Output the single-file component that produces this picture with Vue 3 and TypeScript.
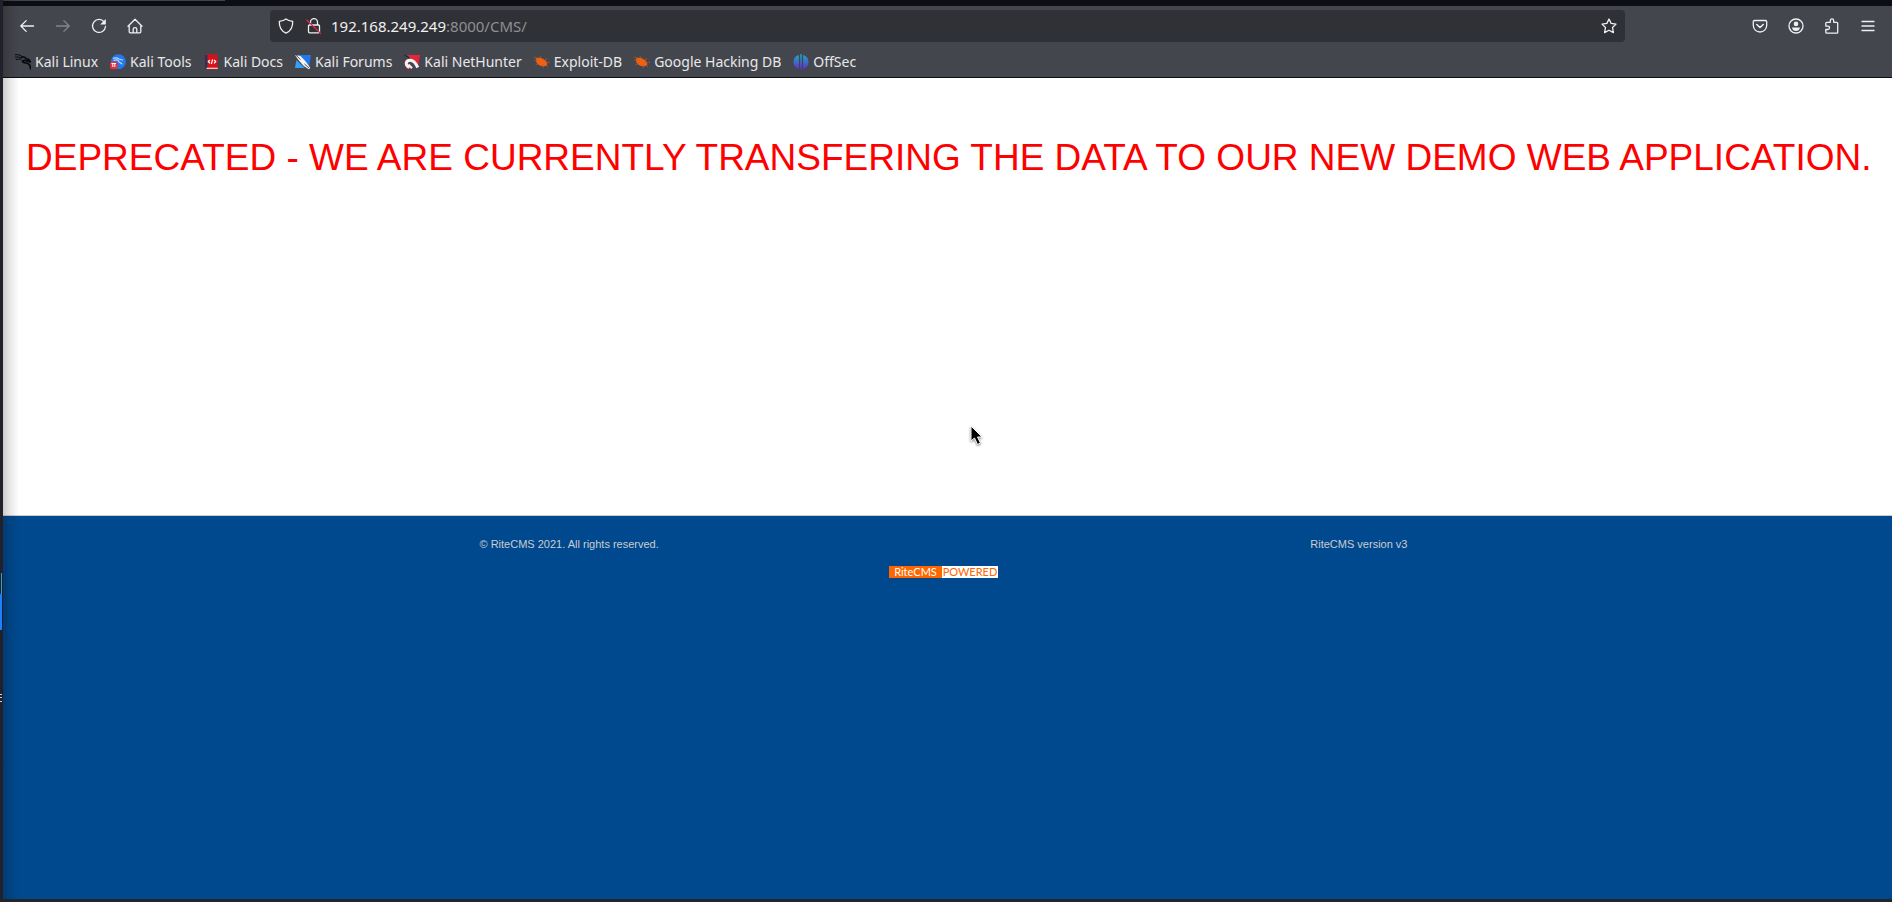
<script setup lang="ts">
import { ref } from 'vue'

interface Bookmark {
  label: string
  icon: 'dragon' | 'tools' | 'docs' | 'forums' | 'nethunter' | 'bug' | 'offsec'
}

const host = ref('192.168.249.249')
const path = ref(':8000/CMS/')

const bookmarks: Bookmark[] = [
  { label: 'Kali Linux', icon: 'dragon' },
  { label: 'Kali Tools', icon: 'tools' },
  { label: 'Kali Docs', icon: 'docs' },
  { label: 'Kali Forums', icon: 'forums' },
  { label: 'Kali NetHunter', icon: 'nethunter' },
  { label: 'Exploit-DB', icon: 'bug' },
  { label: 'Google Hacking DB', icon: 'bug' },
  { label: 'OffSec', icon: 'offsec' },
]
</script>

<template>
  <div class="desktop">
    <div class="edge" aria-hidden="true">
      <span class="edge-line"></span>
      <span class="edge-block"></span>
      <span class="edge-text"></span>
    </div>
    <div class="browser">
      <div class="tabstrip"><div class="tab"></div></div>
      <header class="chrome">
        <nav class="toolbar" aria-label="Navigation">
          <div class="group">
            <button type="button" aria-label="Back">
              <svg viewBox="0 0 16 16"><path d="M14.5 8H1.8M7.2 2.6 1.8 8l5.4 5.4" /></svg>
            </button>
            <button type="button" class="dim" aria-label="Forward">
              <svg viewBox="0 0 16 16"><path d="M1.5 8h12.7M8.8 2.6 14.2 8l-5.4 5.4" /></svg>
            </button>
            <button type="button" aria-label="Reload">
              <svg viewBox="0 0 16 16"><path d="M13.2 4A6.5 6.5 0 1 0 14.5 8.5" /><path class="solid" d="M14.8 1v5.6H9.2z" /></svg>
            </button>
            <button type="button" aria-label="Home">
              <svg viewBox="0 0 16 16"><path d="M1 8.3 8 1.2l7 7.1M2.2 7.2v6.6q0 1 1 1h9.6q1 0 1-1V7.2M6.2 14.8v-3.6q0-1.6 1.8-1.6t1.8 1.6v3.6" /></svg>
            </button>
          </div>
          <div class="address">
            <button type="button" class="small" aria-label="Tracking protection">
              <svg viewBox="0 0 16 16"><path d="M8 .9C6 2.5 3.8 3 1.3 3.4c-.2 5 1.8 9.7 6.7 11.7 4.9-2 6.9-6.7 6.7-11.7C12.2 3 10 2.5 8 .9z" /></svg>
            </button>
            <button type="button" class="small lock" aria-label="Connection not secure">
              <svg viewBox="0 0 16 16"><path d="M4.5 7V4.2a3.5 3.5 0 0 1 7 0V7M3.5 7h9q1 0 1 1v5.8q0 1-1 1h-9q-1 0-1-1V8q0-1 1-1z" /><path class="strike" d="M1 2.2 14.6 15.4" /></svg>
            </button>
            <div class="url" role="textbox" aria-label="Address" tabindex="0"><span class="host">{{ host }}</span><span>{{ path }}</span></div>
            <button type="button" class="small" aria-label="Bookmark this page">
              <svg viewBox="0 0 16 16"><path d="m8 1 2.1 4.4 4.9.7-3.5 3.4.9 5.1L8 12.2l-4.4 2.4.9-5.1L1 6.1l4.9-.7z" /></svg>
            </button>
          </div>
          <div class="group">
            <button type="button" aria-label="Save to Pocket">
              <svg viewBox="0 0 16 16"><path d="M2.5 2.5h11q1.2 0 1.2 1.2v3.9a6.7 6.4 0 0 1-13.4 0V3.7q0-1.2 1.2-1.2z" /><path d="M4.8 6.5 8 9.5l3.2-3" stroke-width="1.6" /></svg>
            </button>
            <button type="button" aria-label="Account">
              <svg viewBox="0 0 16 16"><circle cx="8" cy="8" r="7" /><circle class="solid" cx="8" cy="5.9" r="2.3" /><path class="solid" d="M4 9.5h8q-.6 3.5-4 3.5t-4-3.5z" /></svg>
            </button>
            <button type="button" aria-label="Extensions">
              <svg viewBox="0 0 16 16"><path d="M1.8 8.1V5.2q0-.9.9-.9h3.6V2.7q0-1.8 1.7-1.8t1.7 1.8v1.6h3q1 0 1 .9v9.2q0 .8-.8.8H2.7q-.9 0-.9-.9v-2.8h2q1.7 0 1.7-1.7T3.8 8.1z" /></svg>
            </button>
            <button type="button" aria-label="Application menu">
              <svg viewBox="0 0 16 16"><path d="M2 3.5h12M2 8h12M2 12.5h12" /></svg>
            </button>
          </div>
        </nav>
        <nav class="bookmarks" aria-label="Bookmarks">
          <a v-for="b in bookmarks" :key="b.label" href="#">
            <svg v-if="b.icon === 'dragon'" viewBox="0 0 16 16">
              <path d="M0 .8c3-.6 6.2.4 8 2.6M0 3.2c3-.6 5 0 6.6 1.2M.8 5.7C3 4.8 5 5 6.6 5.5" fill="none" stroke="#08090c" />
              <path d="M6 3.2c2-.5 4 .1 5 1.3l3 1.1 1.2 2.2-3.4-.9C9.500 6.100 7.200 6.500 7.500 7.600c.2.9 1.700 1.100 3.700 1.400 2.900.5 4.300 2.400 4.500 6.500" fill="none" stroke="#08090c" stroke-width="1.7" />
            </svg>
            <svg v-else-if="b.icon === 'tools'" viewBox="0 0 16 16">
              <circle cx="8.4" cy="7.8" r="7.5" fill="#2577ee" />
              <path d="M3 4.4c2.2-1 4.2-.8 6 .6l4 1.2M3.5 6.5c2-1 4-.7 5 .2-.7 1.900 2.700 1.700 3.700 3.600" fill="none" stroke="#b8d9ff" stroke-width="1.2" />
              <rect y="7.500" width="7.500" height="7.800" rx="2.500" fill="#e4303b" />
              <path d="M1.500 9.500H6M2.800 9.500V13M4.800 9.500V13" stroke="#fff" />
            </svg>
            <svg v-else-if="b.icon === 'docs'" viewBox="0 0 16 16">
              <path d="M2 .4h11.500v15H2z" fill="#db1016" /><path d="M1 1h2.400v14H1z" fill="#26355e" /><path d="M2.500 14.300h11.300" stroke="#e8ded8" stroke-width="1.200" />
              <path d="m6 6-1.700 1.600L6 9.300M10 6l1.700 1.600L10 9.300M8.600 5.300 7.400 10" fill="none" stroke="#fff" stroke-width="1.200" />
            </svg>
            <svg v-else-if="b.icon === 'forums'" viewBox="0 0 16 16">
              <path d="M3.400 1H16l-2.200 13.500z" fill="#2478ed" /><path d="M1.400 6 9.700 14H0z" fill="#35a0f5" />
              <path d="M0 1.100 5.500 2l5 5.200L15.300 14l-1.600 1.300-5-3.200L2.600 5z" fill="#f4f4f4" /><path d="m.6.8 4.800 4.800M9.500 10l4.500 4" stroke="#27282c" stroke-width=".8" />
            </svg>
            <svg v-else-if="b.icon === 'nethunter'" viewBox="0 0 16 16">
              <path d="M3 1h13l-2 12z" fill="#e52638" /><path d="m0 6 8 9H2z" fill="#c91636" />
              <path d="M5.500 13.500C1.500 11.500 1.300 7.800 4.500 6.500 9 5 11.500 8.500 13.800 13.500" fill="none" stroke="#f5f2f2" stroke-width="3" />
              <path d="M4.500 10.500l3.500 3.700" stroke="#f5f2f2" stroke-width="2" />
              <path d="m.5 1.200 5 2.500" stroke="#202126" />
            </svg>
            <svg v-else-if="b.icon === 'bug'" viewBox="0 0 16 16">
              <path d="M2 4.100c4-1.400 8.800.8 10.600 4l.8 2.300-2 1.600c-3.500.7-7.600-.6-9-3.800z" fill="#ef6110" />
              <path d="M0 2.800 4 5M.2 6.200l4-.3M1.600 11l4-2.500M6 2.300l2 3M12.500 4 11 8M16 8l-4 1M8.500 10l.7 4M12 11l2 2" stroke="#c55a22" stroke-width=".7" />
            </svg>
            <svg v-else viewBox="0 0 16 16">
              <defs><linearGradient id="offsec-fill" x2="0" y2="1"><stop stop-color="#19acc2" /><stop offset="1" stop-color="#632bd1" /></linearGradient></defs>
              <path d="M5.900 1v14C2.400 14 .5 11.600.5 8s1.900-6 5.400-7zM7.200.3h1.600v15.400H7.200zM10.100 1c3.500 1 5.400 3.400 5.400 7s-1.900 6-5.400 7z" fill="url(#offsec-fill)" />
            </svg>
            <span>{{ b.label }}</span>
          </a>
        </nav>
      </header>
      <main class="page">
        <p class="notice">DEPRECATED - WE ARE CURRENTLY TRANSFERING THE DATA TO OUR NEW DEMO WEB APPLICATION.</p>
      </main>
      <footer class="footer">
        <div class="credits">
          <span>© RiteCMS 2021. All rights reserved.</span>
          <span>RiteCMS version v3</span>
        </div>
        <a href="#" class="badge"><span class="brand">RiteCMS</span><span class="powered">POWERED</span></a>
      </footer>
    </div>
    <svg class="cursor" viewBox="0 0 14 21" aria-hidden="true">
      <path d="M1 1v15l3.5-3 3 6.5 3-1.4-3-6.1H12z" />
    </svg>
  </div>
</template>

<style>
html,
body {
  margin: 0;
  background: #22232a;
}
</style>

<style scoped>
* {
  box-sizing: border-box;
}

.desktop {
  position: relative;
  display: flex;
  min-height: 100vh;
  padding-bottom: 3px;
  background: #242529;
  font-family: "Liberation Sans", Arial, sans-serif;
}

.edge {
  position: relative;
  flex: 0 0 3px;
  background: #20212a;
}

.edge span {
  position: absolute;
  left: 0;
  width: 2px;
}

.edge-line {
  top: 573px;
  height: 21px;
  border-right: 1px solid #35a0c8;
}

.edge-block {
  top: 594px;
  height: 36px;
  background: #207fff;
}

.edge-text {
  top: 694px;
  height: 8px;
  border-top: 1px solid #d5d5d8;
  border-bottom: 1px solid #d5d5d8;
  background: linear-gradient(transparent 2px, #c5c5c8 2px, #c5c5c8 3px, transparent 3px);
}

.browser {
  position: relative;
  flex: 1;
  min-width: 0;
  display: flex;
  flex-direction: column;
}

/* Shadow cast by the neighbouring window */
.browser::before {
  content: "";
  position: absolute;
  z-index: 1;
  inset: 0 auto 0 0;
  width: 16px;
  background: linear-gradient(90deg, rgba(0, 0, 0, 0.2), rgba(0, 0, 0, 0.09) 45%, transparent);
  pointer-events: none;
}

.tabstrip {
  height: 6px;
  background: #0d0e13;
}

.tab {
  width: 222px;
  height: 1px;
  background: #42444b;
}

.chrome {
  background: #44464d;
  border-bottom: 1px solid #0d0e13;
}

.toolbar {
  display: flex;
  align-items: center;
  padding: 4px 6px;
}

.group {
  display: flex;
}

button {
  display: flex;
  align-items: center;
  justify-content: center;
  width: 36px;
  height: 32px;
  padding: 0;
  border: 0;
  background: transparent;
  color: #f0f0f2;
}

button svg {
  width: 16px;
  height: 16px;
  overflow: visible;
  fill: none;
  stroke: currentColor;
  stroke-width: 1.3;
  stroke-linecap: round;
  stroke-linejoin: round;
}

button .solid {
  fill: currentColor;
  stroke: none;
}

.dim {
  color: #85868b;
}

.small {
  width: 32px;
}

.lock {
  width: 24px;
}

.strike {
  stroke: #e32850;
}

.address {
  flex: 1;
  min-width: 0;
  display: flex;
  align-items: center;
  margin: 0 117px;
  border-radius: 4px;
  background: #303136;
}

.url {
  flex: 1;
  min-width: 0;
  margin-left: 5px;
  color: #8e8f93;
  font: 15px/20px "Noto Sans", sans-serif;
  white-space: nowrap;
}

.host {
  color: #f0f0f2;
}

.bookmarks {
  display: flex;
  gap: 12px;
  padding: 6px 12px 5px;
}

.bookmarks a {
  display: flex;
  align-items: center;
  gap: 4px;
  color: #e8e8ea;
  font: 14px/20px "Noto Sans", sans-serif;
  text-decoration: none;
  white-space: nowrap;
}

.bookmarks svg {
  flex: none;
  width: 16px;
  height: 16px;
}

.page {
  min-height: 438px;
  padding: 58px 16px 58px 23px;
  background: #fff;
  border-bottom: 1px solid #ccc;
}

.notice {
  margin: 0;
  color: #f00;
  font-size: 37px;
  line-height: 44px;
}

.footer {
  flex: 1;
  padding: 20px 8px 20px 0;
  background: #00498f;
  color: #ccc;
  font-size: 11px;
  line-height: 16px;
}

.credits {
  display: flex;
  justify-content: space-between;
  max-width: 928px;
  margin: 0 auto 14px;
}

.badge {
  display: flex;
  width: 109px;
  height: 12px;
  margin: 0 auto;
  background: #f60;
  font: 11px/12px Lato, sans-serif;
  text-decoration: none;
}

.brand {
  flex: 1;
  color: #fff;
  text-align: center;
}

.powered {
  width: 56px;
  background: #fff;
  color: #f60;
  text-align: center;
}

.cursor {
  position: absolute;
  top: 425px;
  left: 970px;
  width: 14px;
  height: 21px;
  overflow: visible;
  fill: #000;
  stroke: #fff;
  filter: drop-shadow(0 1px 1px rgba(0, 0, 0, 0.5));
}
</style>
